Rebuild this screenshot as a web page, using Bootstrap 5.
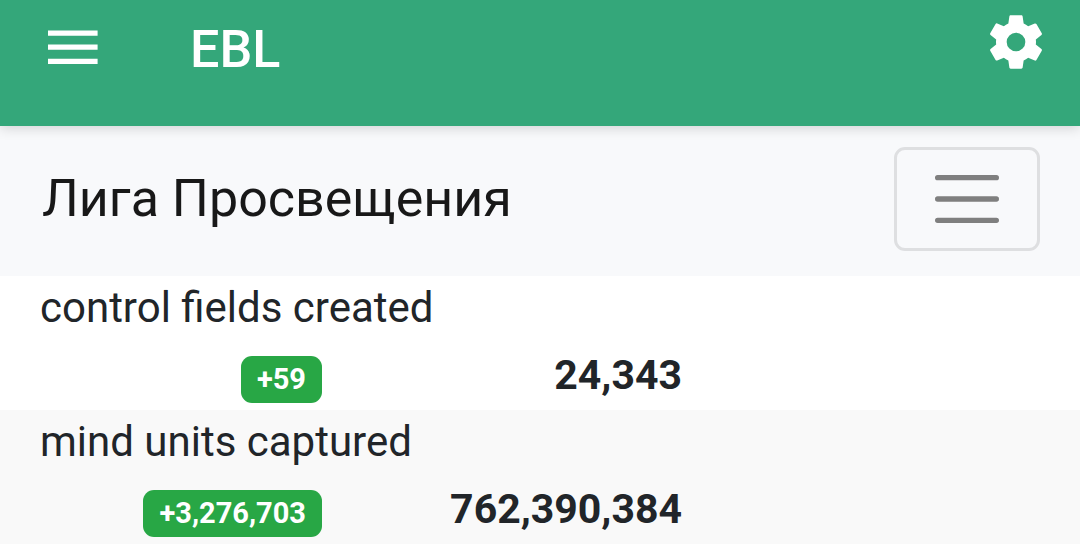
<!DOCTYPE html>
<html lang="en">
<head>
<meta charset="utf-8">
<meta name="viewport" content="width=device-width, initial-scale=1">
<title>EBL</title>
<link href="https://cdn.jsdelivr.net/npm/bootstrap@5.3.0/dist/css/bootstrap.min.css" rel="stylesheet">
<style>
  body { font-family: Roboto, "Liberation Sans", sans-serif; color: #212529; background: #fff; }
  .app-bar { background: #34a77a; min-height: 126px; padding: 10px 32px 0 40px; box-shadow: 0 2px 12px rgba(0, 0, 0, .16); z-index: 1; }
  .icon-button { color: #fff; line-height: 1; }
  .icon-button svg { display: block; width: 64px; height: 64px; }
  .menu-button { margin-top: 6px; }
  .app-title { font-size: 52px; font-weight: 500; line-height: 80px; color: #fff; margin-left: 86px; }
  .league-bar { background: #f8f9fb; min-height: 150px; padding: 0 40px 4px 42px; }
  .league-bar .navbar-brand { font-size: 52px; line-height: 76px; color: #181818; }
  .league-bar .navbar-toggler { border: 3px solid #dedfe1; border-radius: 11px; padding: 9px 30px; }
  .league-bar .navbar-toggler svg { display: block; width: 80px; height: 80px; }
  .stat { min-height: 134px; }
  .stat:nth-child(even) { background: #f9f9f9; }
  .stat-label { padding: 0 40px; font-size: 42px; font-weight: 400; line-height: 64px; }
  .stat-cell { padding-right: 38px; font-size: 41px; font-weight: 700; line-height: 70px; }
  .stat-gain { padding-top: 8px; }
  .stat .badge { background: #28a745; color: #fff; font-size: 29px; line-height: 31px; padding: 8px 16px; border-radius: 11px; }
</style>
</head>
<body>
<header class="app-bar d-flex align-items-start position-relative">
  <button type="button" class="icon-button menu-button btn border-0 p-0" aria-label="Open menu">
    <svg viewBox="0 0 24 24" fill="currentColor" aria-hidden="true"><path d="M3 18h18.600v-2H3zm0-5.300h18.600v-2H3zm0-7.300v2h18.600v-2z"/></svg>
  </button>
  <h1 class="app-title mb-0">EBL</h1>
  <button type="button" class="icon-button btn border-0 p-0 ms-auto" aria-label="Settings">
    <svg viewBox="0 0 24 24" fill="currentColor" aria-hidden="true"><path d="M19.430 12.980c.04-.32.07-.64.07-.98s-.03-.66-.07-.98l2.110-1.650c.19-.15.24-.42.12-.64l-2-3.460c-.12-.22-.39-.3-.61-.22l-2.490 1c-.52-.4-1.080-.73-1.690-.98l-.38-2.650C14.460 2.180 14.250 2 14 2h-4c-.25 0-.46.18-.49.42l-.38 2.650c-.61.25-1.170.59-1.690.98l-2.490-1c-.23-.09-.49 0-.61.22l-2 3.460c-.13.22-.07.49.12.64l2.110 1.650c-.04.32-.07.65-.07.98s.03.66.07.98l-2.110 1.650c-.19.15-.24.42-.12.64l2 3.460c.12.22.39.3.61.22l2.490-1c.52.4 1.080.73 1.690.98l.38 2.650c.03.24.24.42.49.42h4c.25 0 .46-.18.49-.42l.38-2.650c.61-.25 1.170-.59 1.690-.98l2.490 1c.23.09.49 0 .61-.22l2-3.460c.12-.22.07-.49-.12-.64zM12 15.500a3.500 3.500 0 1 1 0-7 3.500 3.500 0 0 1 0 7z"/></svg>
  </button>
</header>
<nav class="league-bar navbar d-flex justify-content-between align-items-center">
  <a class="navbar-brand p-0 m-0" href="#" lang="ru">Лига Просвещения</a>
  <button type="button" class="navbar-toggler" aria-label="Toggle navigation">
    <svg viewBox="0 0 30 30" fill="none" stroke="#7f7f7f" stroke-width="2" stroke-linecap="round" aria-hidden="true"><path d="M4 7h22M4 15h22M4 23h22"/></svg>
  </button>
</nav>
<main>
  <dl class="mb-0">
    <div class="stat row g-0">
      <dt class="stat-label col-12">control fields created</dt>
      <dd class="stat-cell stat-gain col-4 mb-0 d-flex justify-content-end align-items-center"><span class="badge">+59</span></dd>
      <dd class="stat-cell col-4 mb-0 text-end">24,343</dd>
    </div>
    <div class="stat row g-0">
      <dt class="stat-label col-12">mind units captured</dt>
      <dd class="stat-cell stat-gain col-4 mb-0 d-flex justify-content-end align-items-center"><span class="badge">+3,276,703</span></dd>
      <dd class="stat-cell col-4 mb-0 text-end">762,390,384</dd>
    </div>
  </dl>
</main>
<script src="https://cdn.jsdelivr.net/npm/bootstrap@5.3.0/dist/js/bootstrap.bundle.min.js"></script>
</body>
</html>
